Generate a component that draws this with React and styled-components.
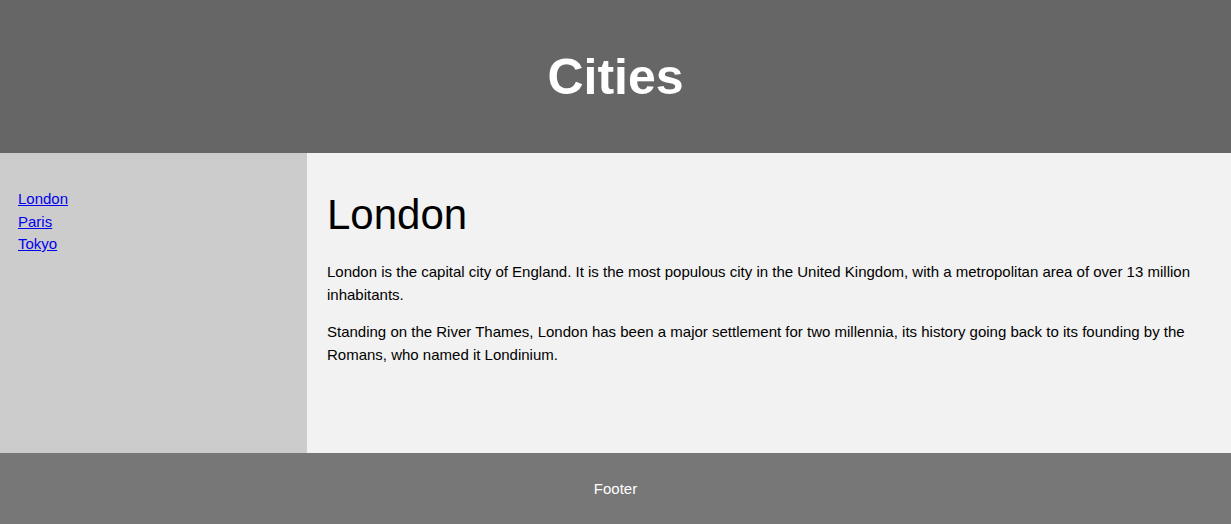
import React from "react";
import styled, { createGlobalStyle } from "styled-components";

const GlobalStyle = createGlobalStyle`
  * { box-sizing: border-box; }
  body {
    margin: 0;
    font-family: "Liberation Sans", Arial, Helvetica, sans-serif;
  }
`;

const Header = styled.header`
  height: 153px;
  background: #666;
  color: #fff;
  display: flex;
  align-items: center;
  justify-content: center;

  h2 {
    margin: 0;
    font-size: 50px;
    font-weight: bold;
  }
`;

const Section = styled.section`
  display: flex;
  height: 300px;
`;

const Nav = styled.nav`
  width: 307px;
  background: #ccc;
  padding: 35px 18px;
`;

const NavList = styled.ul`
  list-style: none;
  margin: 0;
  padding: 0;
  font-size: 15px;
  line-height: 22.5px;

  a {
    color: #0000ee;
  }
`;

const Article = styled.article`
  flex: 1;
  background: #f2f2f2;
  padding: 37px 20px 20px;

  h1 {
    margin: 0 0 20px;
    font-size: 42px;
    font-weight: normal;
    line-height: 50px;
  }

  p {
    margin: 0 0 14px;
    font-size: 15px;
    line-height: 23px;
  }
`;

const Footer = styled.footer`
  height: 71px;
  background: #777;
  color: #fff;
  font-size: 15px;
  display: flex;
  align-items: center;
  justify-content: center;
`;

export default function App() {
  return (
    <>
      <GlobalStyle />
      <Header>
        <h2>Cities</h2>
      </Header>
      <Section>
        <Nav>
          <NavList>
            <li><a href="#">London</a></li>
            <li><a href="#">Paris</a></li>
            <li><a href="#">Tokyo</a></li>
          </NavList>
        </Nav>
        <Article>
          <h1>London</h1>
          <p>
            London is the capital city of England. It is the most populous city
            in the United Kingdom, with a metropolitan area of over 13 million
            inhabitants.
          </p>
          <p>
            Standing on the River Thames, London has been a major settlement for
            two millennia, its history going back to its founding by the Romans,
            who named it Londinium.
          </p>
        </Article>
      </Section>
      <Footer>
        <p>Footer</p>
      </Footer>
    </>
  );
}
